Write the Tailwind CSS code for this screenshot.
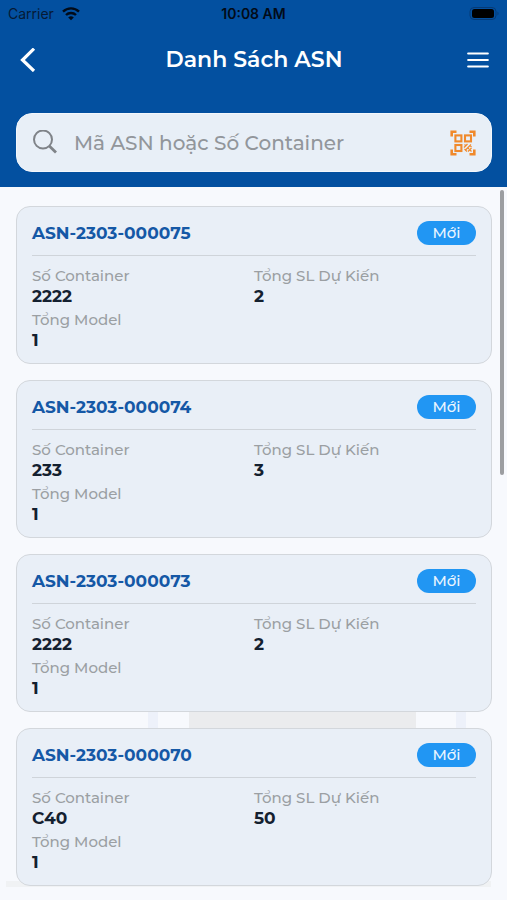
<!DOCTYPE html>
<html lang="vi">
<head>
<meta charset="utf-8">
<meta name="viewport" content="width=device-width, initial-scale=1">
<title>Danh Sách ASN</title>
<script src="https://cdn.jsdelivr.net/npm/@tailwindcss/browser@4"></script>
</head>
<body class="min-h-screen overflow-x-hidden bg-[#f7f9fd] font-['Montserrat','Inter',sans-serif]">
<div class="relative flex min-h-screen flex-col">
  <header class="bg-[#0350a0] pr-[15px] pb-[15px] pl-4">
    <div class="-mr-[15px] -ml-4 grid h-7 grid-cols-3 items-center px-2 font-['Inter',sans-serif] text-[14px] leading-4 text-[#061a35]">
      <div class="flex items-center gap-2">
        <span>Carrier</span>
        <svg class="h-3.5 w-[18px]" viewBox="0 0 18 14" fill="none" stroke="#020b18" stroke-width="2.4" aria-hidden="true"><path d="M1 4.600a11.500 11.500 0 0 1 16 0"/><path d="M4 8a7.200 7.200 0 0 1 10 0"/><path d="M9 13.200 6.200 10.500a4 4 0 0 1 5.600 0z" fill="#020b18" stroke="none"/></svg>
      </div>
      <div class="text-center font-semibold text-[#020b18]">10:08 AM</div>
      <svg class="h-3.5 w-[30px] justify-self-end" viewBox="0 0 30 14" aria-hidden="true"><rect x="1" y=".5" width="26" height="12" rx="4" fill="none" stroke="#063a75"/><rect x="3" y="2" width="22" height="9" rx="2.500" fill="#000"/><path d="M28.500 4.500v4c1.300-.6 1.300-3.400 0-4z" fill="#063a75"/></svg>
    </div>
    <div class="flex h-16 items-center justify-between">
      <button type="button" aria-label="Quay lại" class="flex size-7 items-center justify-start">
        <svg class="size-6" viewBox="0 0 24 24" fill="none" stroke="#fff" stroke-width="3.200" aria-hidden="true"><path d="M18 .7 6.500 12 18 23"/></svg>
      </button>
      <h1 class="text-[22px] leading-7 font-semibold text-white">Danh Sách ASN</h1>
      <button type="button" aria-label="Mở menu" class="flex size-7 items-center justify-center">
        <svg class="h-4 w-[22px]" viewBox="0 0 22 16" stroke="#fff" stroke-width="2.200" stroke-linecap="round" aria-hidden="true"><path d="M1.200 1.500h19.600M1.200 8h19.600M1.200 14.500h19.600"/></svg>
      </button>
    </div>
    <div class="mt-[21px] flex h-[59px] items-center rounded-2xl border border-[#f3f7fc] bg-[#e8eff7] px-[15px]">
      <label for="search" class="shrink-0" aria-label="Tìm kiếm">
        <svg class="size-[26px]" viewBox="0 0 26 26" fill="none" stroke="#7f8388" aria-hidden="true"><circle cx="11" cy="9.500" r="9" stroke-width="2"/><path d="m17.300 16 6.700 6.500" stroke-width="2.800"/></svg>
      </label>
      <input id="search" type="text" placeholder="Mã ASN hoặc Số Container" class="ml-4 min-w-0 flex-1 bg-transparent text-[20px] leading-7 font-medium text-[#14233a] outline-none placeholder:text-[#92969b]">
      <button type="button" aria-label="Quét mã QR" class="shrink-0">
        <svg class="size-[26px]" viewBox="0 0 26 26" fill="none" stroke="#f0892b" stroke-width="2.100" aria-hidden="true"><path d="M1.700 6.500V1.700h4.800M19.500 1.700h4.800v4.800M1.700 19.500v4.800h4.800M19.500 24.300h4.800v-4.800" stroke-width="2.600"/><rect x="5.400" y="5.400" width="6" height="6"/><rect x="15" y="5.400" width="6" height="6"/><rect x="5.400" y="15" width="6" height="6"/><path d="M14 17.500l3.500-3.500M15 20.500l6-6M18 21.500l3.500-3.500M14.500 14.500l1.500 1.500M17.500 17.500l1.500 1.500M20 15.500l1.500 1.500M14.500 19l2.500 2.500M20 20l1.500 1.500" stroke-width="1.200"/></svg>
      </button>
    </div>
  </header>

  <main class="relative flex-1">
    <div class="absolute inset-x-0 top-0 h-full" aria-hidden="true">
      <div class="absolute top-[520px] left-[148px] h-8 w-2.5 bg-[#edf1fa]"></div>
      <div class="absolute top-[520px] left-[189px] h-8 w-[227px] bg-[#ebecee]"></div>
      <div class="absolute top-[520px] left-[456px] h-8 w-2.5 bg-[#edf1fa]"></div>
      <div class="absolute top-[694px] right-4 left-1.5 h-1.5 bg-[#f0f2f4]"></div>
    </div>
    <ul id="list" class="relative flex flex-col gap-4 pt-[19px] pr-[15px] pb-3.5 pl-4"></ul>
    <div class="absolute top-[3px] right-[3px] h-[285px] w-1 rounded-full bg-[#9c9ea1]" aria-hidden="true"></div>
  </main>
</div>

<template id="card">
  <li class="rounded-[14px] border border-[#d3d7dc] bg-[#e9eff7] px-[15px] pb-[13px]">
    <div class="flex items-center justify-between border-b border-[#cfd4da] pt-[14px] pb-[10px]">
      <h2 class="text-[17px] leading-6 font-bold text-[#1558a6]" data-field="code"></h2>
      <span class="h-6 w-[59px] rounded-full bg-[#2196f3] text-center text-[15px] leading-6 font-medium text-[#eaf5ff]">Mới</span>
    </div>
    <dl class="grid grid-cols-2 gap-y-1 pt-2.5 leading-5">
      <div><dt class="text-[15px] leading-5 font-medium text-[#9b9fa3]">Số Container</dt><dd class="text-[17px] leading-5 font-bold text-[#14202f]" data-field="container"></dd></div>
      <div><dt class="text-[15px] leading-5 font-medium text-[#9b9fa3]">Tổng SL Dự Kiến</dt><dd class="text-[17px] leading-5 font-bold text-[#14202f]" data-field="quantity"></dd></div>
      <div><dt class="text-[15px] leading-5 font-medium text-[#9b9fa3]">Tổng Model</dt><dd class="text-[17px] leading-5 font-bold text-[#14202f]" data-field="models"></dd></div>
    </dl>
  </li>
</template>
<script>
  const items = [
    { code: 'ASN-2303-000075', container: '2222', quantity: 2, models: 1 },
    { code: 'ASN-2303-000074', container: '233', quantity: 3, models: 1 },
    { code: 'ASN-2303-000073', container: '2222', quantity: 2, models: 1 },
    { code: 'ASN-2303-000070', container: 'C40', quantity: 50, models: 1 }
  ];
  const list = document.getElementById('list');
  const template = document.getElementById('card');
  for (const item of items) {
    const card = template.content.cloneNode(true);
    for (const el of card.querySelectorAll('[data-field]')) el.textContent = item[el.dataset.field];
    list.append(card);
  }
</script>
</body>
</html>
